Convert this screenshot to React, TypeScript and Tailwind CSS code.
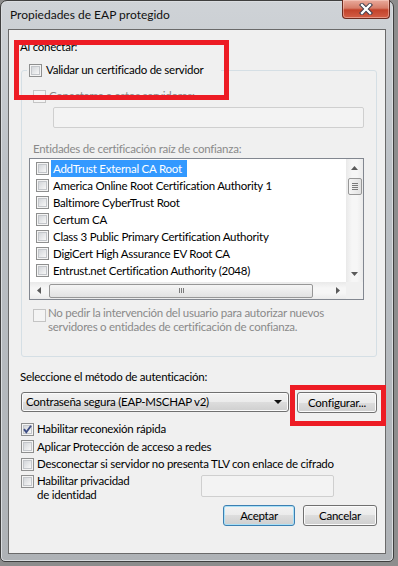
import React from "react";

const SANS = "font-['Lato','Liberation_Sans',sans-serif]";

const certs = [
  "AddTrust External CA Root",
  "America Online Root Certification Authority 1",
  "Baltimore CyberTrust Root",
  "Certum CA",
  "Class 3 Public Primary Certification Authority",
  "DigiCert High Assurance EV Root CA",
  "Entrust.net Certification Authority (2048)",
];

function Check({ checked = false, disabled = false }: { checked?: boolean; disabled?: boolean }) {
  if (disabled) {
    return <span className="block h-[13px] w-[13px] shrink-0 border border-[#c4c4c4] bg-[#f4f4f4]" />;
  }
  return (
    <span className="relative flex h-[13px] w-[13px] shrink-0 items-center justify-center border border-[#8e8f8f] bg-[#f4f4f4]">
      <span className="h-[9px] w-[9px] border border-[#c3c6ca] bg-[linear-gradient(135deg,#d3d6da,#f7f7f7)]" />
      {checked && (
        <svg className="absolute left-0 top-0" width="11" height="11" viewBox="0 0 11 11">
          <path d="M2 5.2 L4.3 8.2 L9 1.8" fill="none" stroke="#3d4d84" strokeWidth="1.9" />
        </svg>
      )}
    </span>
  );
}

function Btn({ children, className = "", primary = false }: { children: React.ReactNode; className?: string; primary?: boolean }) {
  return (
    <button
      className={`flex h-[21px] items-center justify-center rounded-[3px] border bg-[linear-gradient(#f2f2f2_0%,#ebebeb_50%,#dddddd_50%,#cfcfcf_100%)] leading-none text-black ${
        primary ? "border-[#3c7fb1] shadow-[inset_0_0_0_1px_#a9e0f7]" : "border-[#707070] shadow-[inset_0_0_0_1px_#fbfbfb]"
      } ${className}`}
    >
      {children}
    </button>
  );
}

function Arrow({ dir }: { dir: "up" | "down" | "left" | "right" }) {
  const d = {
    up: "M3.5 0 L7 4 L0 4 Z",
    down: "M0 0 L7 0 L3.5 4 Z",
    left: "M0 3.5 L4 0 L4 7 Z",
    right: "M0 0 L4 3.5 L0 7 Z",
  }[dir];
  const vertical = dir === "up" || dir === "down";
  return (
    <svg width={vertical ? 7 : 4} height={vertical ? 4 : 7} viewBox={vertical ? "0 0 7 4" : "0 0 4 7"}>
      <path d={d} fill="#5a5a5a" />
    </svg>
  );
}

function CertList() {
  return (
    <div className="ml-[7px] mt-[2px] flex h-[142px] w-[335px] flex-col border border-[#828790] bg-white">
      <div className="flex h-[123px]">
        <div className="flex-1 overflow-hidden pt-[1px]">
          {certs.map((c, i) => (
            <div key={c} className="flex h-[17px] items-center gap-[2px] pl-[6px]">
              <Check />
              <span className={`px-[2px] pr-[5px] leading-[17px] ${i === 0 ? "bg-[#3399ff] text-white" : "text-black"}`}>{c}</span>
            </div>
          ))}
        </div>
        <div className="flex w-[17px] flex-col items-center bg-[linear-gradient(90deg,#e9e9e9,#f6f6f6_35%,#f6f6f6_65%,#ebebeb)]">
          <div className="flex h-[17px] items-center justify-center">
            <Arrow dir="up" />
          </div>
          <div className="mt-[2px] flex h-[17px] w-[14px] flex-col items-center justify-center gap-[1px] rounded-[2px] border border-[#979797] bg-[linear-gradient(90deg,#f5f5f5,#e2e2e2)]">
            <span className="h-px w-[6px] bg-[#7a7a7a]" />
            <span className="h-px w-[6px] bg-[#7a7a7a]" />
            <span className="h-px w-[6px] bg-[#7a7a7a]" />
            <span className="h-px w-[6px] bg-[#7a7a7a]" />
          </div>
          <div className="flex-1" />
          <div className="flex h-[17px] items-center justify-center">
            <Arrow dir="down" />
          </div>
        </div>
      </div>
      <div className="flex h-[17px]">
        <div className="flex flex-1 items-center bg-[linear-gradient(#e9e9e9,#f6f6f6_35%,#f6f6f6_65%,#ebebeb)]">
          <div className="flex h-[17px] w-[17px] items-center justify-center">
            <Arrow dir="left" />
          </div>
          <div className="ml-[2px] flex h-[14px] w-[264px] items-center justify-center gap-[1px] rounded-[2px] border border-[#979797] bg-[linear-gradient(#f5f5f5,#e2e2e2)]">
            <span className="h-[5px] w-px bg-[#7a7a7a]" />
            <span className="h-[5px] w-px bg-[#7a7a7a]" />
            <span className="h-[5px] w-px bg-[#7a7a7a]" />
          </div>
          <div className="flex-1" />
          <div className="flex h-[17px] w-[17px] items-center justify-center">
            <Arrow dir="right" />
          </div>
        </div>
        <div className="w-[17px] bg-[#f0f0f0]" />
      </div>
    </div>
  );
}

export default function App() {
  return (
    <div className={`relative h-[566px] w-[398px] overflow-hidden bg-[#8d8d8d] ${SANS}`}>
      <div className="flex h-[562px] w-[394px] flex-col rounded-b-[5px] rounded-t-[7px] border border-[#3f3f3f] bg-[linear-gradient(#cfd3d7_0%,#bcc1c6_30%,#aeb2b6_100%)] shadow-[inset_0_0_0_1px_#dadde0]">
        {/* Title bar */}
        <div className="flex h-[28px] items-center justify-between pl-[9px] pr-[3px]">
          <span className="text-[12px] leading-none text-[#111]">Propiedades de EAP protegido</span>
          <div className="-mt-[1px] flex h-[19px] w-[48px] items-center justify-center self-start rounded-b-[4px] border border-t-0 border-[#6b2b1f] bg-[linear-gradient(#e9ab9c_0%,#d67d69_45%,#c2422a_55%,#d35f46_100%)] shadow-[inset_0_0_0_1px_rgba(255,220,210,0.45)]">
            <svg width="14" height="12" viewBox="0 0 14 12">
              <path d="M3 2 L11 10 M11 2 L3 10" stroke="#3a3a4a" strokeWidth="4.2" strokeLinecap="square" />
              <path d="M3 2 L11 10 M11 2 L3 10" stroke="#ffffff" strokeWidth="2.3" strokeLinecap="square" />
            </svg>
          </div>
        </div>

        {/* Client area */}
        <div className="mx-[7px] mb-[7px] flex flex-1 flex-col border border-[#6a6a6a] bg-[#f0f0f0] pl-[11px] pr-[8px] pt-[10px] text-[11.5px] leading-[14px] tracking-[-0.25px] text-black">
          <div className="h-[14px]">Al conectar:</div>

          <fieldset className="ml-[1px] mt-[9px] rounded-[3px] border border-[#d5dfe5] pb-[22px]">
            <legend className="ml-[5px] flex h-[14px] items-center gap-[4px] pl-[2px] pr-[18px]">
              <Check />
              <span>Validar un certificado de servidor</span>
            </legend>

            <div className="mt-[12px] flex h-[14px] items-center gap-[3px] pl-[11px] text-[#8a8a8a]">
              <Check disabled />
              <span>Conectarse a estos servidores:</span>
            </div>
            <div className="ml-[31px] mt-[4px] h-[21px] w-[311px] rounded-[2px] border border-[#cfcfcf] bg-[#f3f3f3]" />

            <div className="ml-[11px] mt-[14px] h-[14px] text-[#8a8a8a]">Entidades de certificación raíz de confianza:</div>
            <CertList />

            <div className="ml-[11px] mt-[6px] flex gap-[2px] text-[#8a8a8a]">
              <div className="pt-[3px]">
                <Check disabled />
              </div>
              <div>
                No pedir la intervención del usuario para autorizar nuevos
                <br />
                servidores o entidades de certificación de confianza.
              </div>
            </div>
          </fieldset>

          <div className="mt-[13px] h-[14px]">Seleccione el método de autenticación:</div>
          <div className="ml-[1px] mt-[8px] flex items-start gap-[8px]">
            <div className="flex h-[20px] w-[268px] items-center justify-between rounded-[3px] border border-[#707070] bg-[linear-gradient(#f2f2f2_0%,#ebebeb_50%,#dddddd_50%,#cfcfcf_100%)] pl-[4px] pr-[6px] shadow-[inset_0_0_0_1px_#fbfbfb]">
              <span>Contraseña segura (EAP-MSCHAP v2)</span>
              <svg width="8" height="4" viewBox="0 0 8 4">
                <path d="M0 0 L8 0 L4 4 Z" fill="#111" />
              </svg>
            </div>
            <Btn className="w-[80px]">Configurar...</Btn>
          </div>

          <div className="ml-[1px] mt-[7px] flex h-[18px] items-center gap-[3px]">
            <Check checked />
            <span>Habilitar reconexión rápida</span>
          </div>
          <div className="ml-[1px] flex h-[17px] items-center gap-[3px]">
            <Check />
            <span>Aplicar Protección de acceso a redes</span>
          </div>
          <div className="ml-[1px] flex h-[18px] items-center gap-[3px]">
            <Check />
            <span>Desconectar si servidor no presenta TLV con enlace de cifrado</span>
          </div>
          <div className="ml-[1px] flex items-start">
            <div className="flex w-[180px] gap-[3px] pt-[1px]">
              <div className="pt-[1px]">
                <Check />
              </div>
              <div>
                Habilitar privacidad
                <br />
                de identidad
              </div>
            </div>
            <div className="mt-[2px] h-[22px] w-[133px] rounded-[2px] border border-[#cfcfcf] bg-[#f3f3f3]" />
          </div>

          <div className="mt-[3px] flex justify-end gap-[8px]">
            <Btn primary className="w-[72px]">Aceptar</Btn>
            <Btn className="w-[74px]">Cancelar</Btn>
          </div>
        </div>
      </div>

      {/* Red highlight frames drawn over the screenshot */}
      <div className="absolute left-[14px] top-[40px] h-[60px] w-[215px] border-[5px] border-[#ed1c24]" />
      <div className="absolute left-[290px] top-[385px] h-[41px] w-[96px] border-[5px] border-[#ed1c24]" />
    </div>
  );
}
